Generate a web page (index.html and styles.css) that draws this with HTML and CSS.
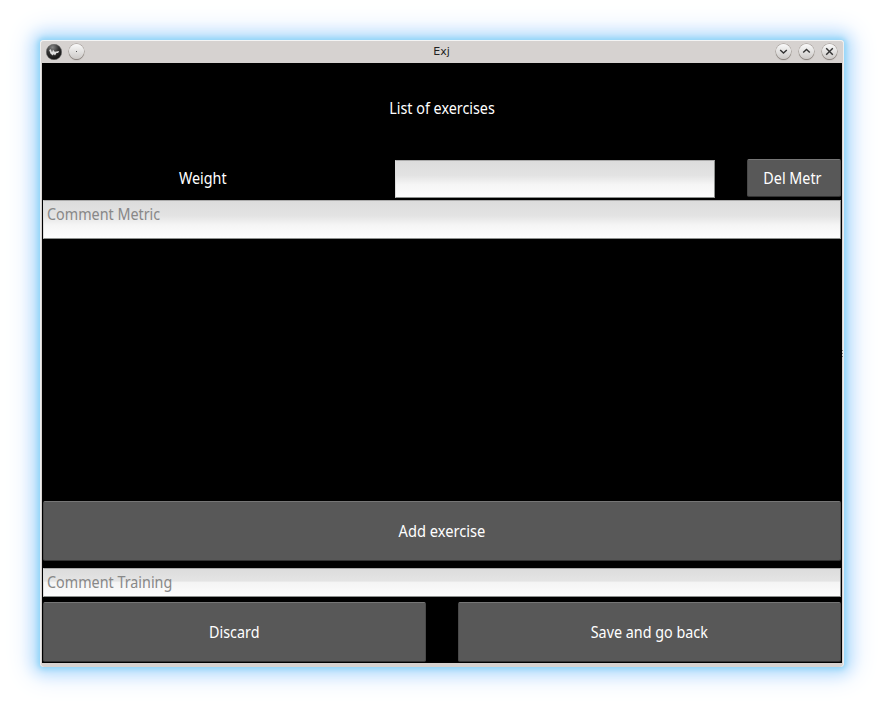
FILE: index.html
```html
<!DOCTYPE html>
<html lang="en">
<head>
<meta charset="utf-8">
<title>Exj</title>
<link rel="stylesheet" href="styles.css">
</head>
<body>
<main class="window">
  <header class="titlebar">
    <div class="controls">
      <svg class="app-icon" viewBox="0 0 16 16"><defs><radialGradient id="dark" cx=".4" cy=".2" r=".8"><stop offset="0" stop-color="#888"/><stop offset=".5" stop-color="#333"/><stop offset="1" stop-color="#111"/></radialGradient></defs><circle cx="8" cy="8" r="7.7" fill="url(#dark)" stroke="#666" stroke-width=".6"/><path d="M3.2 6l1.6-.7L6 8.2l1-2.4 1.8 1.9 4.4-.7-1.1 1.9-1.6.2L9 11.6 7.8 9.9 6.9 11.4 4.6 9.8z" fill="#e0e0e0"/></svg>
      <span class="round"><svg viewBox="0 0 15 15"><path d="M7 7h1v1H7z" fill="#555"/></svg></span>
    </div>
    <h1 class="caption">Exj</h1>
    <div class="controls right">
      <span class="round"><svg viewBox="0 0 15 15"><path class="sign" d="M4.2 6l3.3 3 3.3-3"/></svg></span>
      <span class="round"><svg viewBox="0 0 15 15"><path class="sign" d="M4.2 8.5l3.3-3 3.3 3"/></svg></span>
      <span class="round"><svg viewBox="0 0 15 15"><path class="sign" d="M4.2 4.2l6.6 6.6m0-6.6l-6.6 6.6"/></svg></span>
    </div>
  </header>
  <section class="content">
    <h2 class="heading"><span class="label">List of exercises</span></h2>
    <div class="metric">
      <div class="metric-name"><span class="label">Weight</span></div>
      <div class="field value"></div>
      <div class="button delete"><span class="label">Del Metr</span></div>
    </div>
    <div class="field comment"><span class="label">Comment Metric</span></div>
    <div class="spacer"></div>
    <div class="button add"><span class="label">Add exercise</span></div>
    <div class="field training"><span class="label">Comment Training</span></div>
    <div class="actions">
      <div class="button"><span class="label">Discard</span></div>
      <div class="button"><span class="label">Save and go back</span></div>
    </div>
  </section>
  <div class="grip"></div>
</main>
</body>
</html>
```
FILE: styles.css
```css
* { box-sizing: border-box; }
body { margin: 0; padding: 40px; background: #fff; font-family: "Noto Sans", sans-serif; }
.window {
  position: relative;
  width: 804px; height: 627px; padding: 0 2px 4px;
  background: #d6d2d0; border-radius: 4px;
  box-shadow: inset 0 1px #f4f4f4, inset 1px 0 #eee, inset -1px 0 #eee, 0 0 5px 2px #8fd4f8, 0 0 14px 6px #b4dffb, 0 0 26px 9px #d5e6ff;
}
.titlebar { display: grid; grid-template-columns: 1fr auto 1fr; height: 23px; padding: 0 5px 0 4px; }
.controls { display: flex; align-items: center; gap: 7px; padding-bottom: 1px; }
.right { justify-content: flex-end; gap: 8px; }
.app-icon { width: 16px; height: 16px; }
.round { width: 15px; height: 15px; margin-top: -1px; border-radius: 50%; background: linear-gradient(#fafafa, #ccc9c7); box-shadow: 0 0 0 .5px #99918c, 0 1px 1px #77706b; }
.round svg { display: block; width: 15px; height: 15px; }
.sign { fill: none; stroke: #333; stroke-width: 1.4; }
.caption { margin: 0; font: 11px/24px "DejaVu Sans", sans-serif; color: #222; }
.content { display: flex; flex-direction: column; height: 600px; padding: 0 1px 1px; background: #000; color: #fff; font-size: 15.5px; line-height: 20px; }
.heading { display: flex; align-items: center; justify-content: center; height: 90px; margin: 0 0 6px; font: inherit; }
.metric { display: flex; height: 39px; margin-bottom: 2px; }
.metric-name { display: flex; align-items: center; justify-content: center; width: 320px; height: 38px; margin-right: 31px; }
.field { padding: 3px; color: #888; background: linear-gradient(#dcdcdc, #e3e3e3 40%, #f5f5f5 65%, #fdfdfd); border: 1px solid #8e918f; border-top-color: #aaa; border-left-color: #ddd; }
.value { width: 320px; height: 38px; margin: 1px 32px 0 1px; }
.button { display: flex; align-items: center; justify-content: center; flex: none; height: 60px; background: #585858; border: 1px solid #494949; border-top-color: #767676; border-bottom-color: #333; border-radius: 2px; }
.delete { width: 94px; height: 38px; padding-right: 3px; }
.comment { height: 39px; }
.spacer { flex: 1; }
.training { height: 29px; margin: 7px 0 5px; background: linear-gradient(#dcdcdc, #e4e4e4 44%, #f4f4f4 50%, #fdfdfd); }
.actions { display: grid; grid-template-columns: 1fr 1fr; gap: 32px; }
.label { display: block; white-space: nowrap; transform: scaleX(.925); }
.add .label { transform: scaleX(.945); }
.field .label { transform-origin: left; }
.grip { position: absolute; right: 1px; top: 310px; width: 1px; height: 7px; background: repeating-linear-gradient(#777 0 1px, #ddd 1px 3px); }
```
